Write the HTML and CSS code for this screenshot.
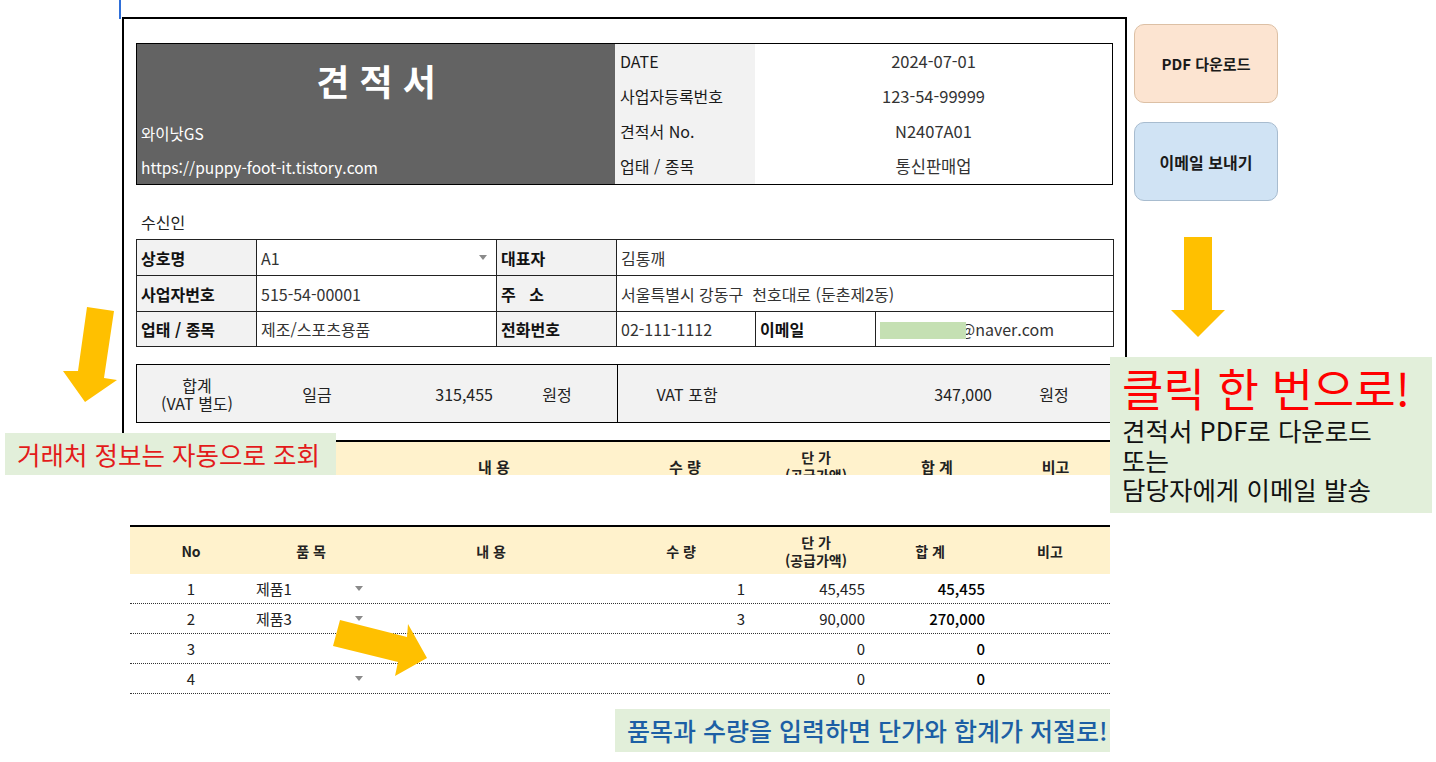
FILE: index.html
```html
<!DOCTYPE html>
<html lang="ko">
<head>
<meta charset="utf-8">
<title>견적서</title>
<link rel="stylesheet" href="styles.css">
</head>
<body>
<div class="cursor"></div>

<div class="top">
  <div class="sheet">
    <div class="hdr">
      <div class="brand">
        <div class="title">견 적 서</div>
        <div class="bline">와이낫GS</div>
        <div class="bline">https://puppy-foot-it.tistory.com</div>
      </div>
      <div class="ilabel">DATE</div><div class="ival">2024-07-01</div>
      <div class="ilabel">사업자등록번호</div><div class="ival">123-54-99999</div>
      <div class="ilabel">견적서 No.</div><div class="ival">N2407A01</div>
      <div class="ilabel">업태 / 종목</div><div class="ival">통신판매업</div>
    </div>

    <div class="recv-title">수신인</div>
    <table class="recv">
      <colgroup>
        <col class="w120"><col class="w240"><col class="w120"><col class="w139"><col class="w120"><col class="w238">
      </colgroup>
      <tr class="h36">
        <th>상호명</th>
        <td><div class="dd"><span>A1</span><i class="caret"></i></div></td>
        <th>대표자</th>
        <td colspan="3">김통깨</td>
      </tr>
      <tr class="h36">
        <th>사업자번호</th>
        <td>515-54-00001</td>
        <th>주&nbsp;&nbsp;&nbsp;소</th>
        <td colspan="3">서울특별시 강동구&nbsp; 천호대로 (둔촌제2동)</td>
      </tr>
      <tr class="h35">
        <th>업태 / 종목</th>
        <td>제조/스포츠용품</td>
        <th>전화번호</th>
        <td>02-111-1112</td>
        <th class="plain">이메일</th>
        <td><span class="mask"></span><span class="mail">@naver.com</span></td>
      </tr>
    </table>

    <div class="total">
      <div class="tc two">합계<br>(VAT 별도)</div>
      <div class="tc">일금</div>
      <div class="tc r">315,455</div>
      <div class="tc">원정</div>
      <div class="tc sep">VAT 포함</div>
      <div class="tc r">347,000</div>
      <div class="tc">원정</div>
    </div>

    <div class="uhead">
      <div></div>
      <div></div>
      <div>내 용</div>
      <div>수 량</div>
      <div class="two cut">단 가<br>(공급가액)</div>
      <div>합 계</div>
      <div>비고</div>
    </div>
  </div>

  <div class="btns">
    <div class="btn pdf">PDF 다운로드</div>
    <div class="btn email">이메일 보내기</div>
  </div>
</div>

<div class="items">
  <div class="irow ihead">
    <div>No</div>
    <div>품 목</div>
    <div>내 용</div>
    <div>수 량</div>
    <div class="two shift">단 가<br>(공급가액)</div>
    <div>합 계</div>
    <div>비고</div>
  </div>
  <div class="irow">
    <div class="c">1</div>
    <div class="prod"><span>제품1</span><i class="caret"></i></div>
    <div></div>
    <div class="r">1</div>
    <div class="r">45,455</div>
    <div class="r b">45,455</div>
    <div></div>
  </div>
  <div class="irow">
    <div class="c">2</div>
    <div class="prod"><span>제품3</span><i class="caret"></i></div>
    <div></div>
    <div class="r">3</div>
    <div class="r">90,000</div>
    <div class="r b">270,000</div>
    <div></div>
  </div>
  <div class="irow">
    <div class="c">3</div>
    <div class="prod"><span></span></div>
    <div></div>
    <div class="r"></div>
    <div class="r">0</div>
    <div class="r b">0</div>
    <div></div>
  </div>
  <div class="irow">
    <div class="c">4</div>
    <div class="prod"><span></span><i class="caret"></i></div>
    <div></div>
    <div class="r"></div>
    <div class="r">0</div>
    <div class="r b">0</div>
    <div></div>
  </div>
</div>

<div class="note-bottom">품목과 수량을 입력하면 단가와 합계가 저절로!</div>

<div class="note-left">거래처 정보는 자동으로 조회</div>

<div class="note-right">
  <div class="big">클릭 한 번으로!</div>
  <div class="ln">견적서 PDF로 다운로드</div>
  <div class="ln">또는</div>
  <div class="ln">담당자에게 이메일 발송</div>
</div>

<svg class="arrow a-left" width="60" height="100" viewBox="0 0 60 100">
  <polygon points="27,3 54,7 44,74 57,76 25,98 3,67 18,67"/>
</svg>
<svg class="arrow a-right" width="56" height="101" viewBox="0 0 56 101">
  <polygon points="14,0 42,0 42,73 55,73 28,100 1,73 14,73"/>
</svg>
<svg class="arrow a-mid" width="100" height="60" viewBox="0 0 100 60">
  <polygon points="10,2 77,19 78,6 97,40 65,58 68,44 3,28"/>
</svg>
</body>
</html>
```

FILE: styles.css
```css
* { box-sizing: border-box; margin: 0; padding: 0; }

html, body {
  width: 1436px;
  height: 762px;
  overflow: hidden;
  background: #fff;
}

body {
  position: relative;
  font-family: "Noto Sans CJK KR", "Noto Sans", sans-serif;
  font-size: 16px;
  color: #222;
}

.cursor {
  position: absolute;
  left: 119px;
  top: 0;
  width: 2px;
  height: 19px;
  background: #2f6fd8;
}

.top {
  display: flex;
  align-items: flex-start;
}

.sheet {
  margin-left: 122px;
  margin-top: 17px;
  width: 1005px;
  height: 458px;
  border: 2px solid #000;
  border-bottom: none;
  padding: 24px 0 0 12px;
  overflow: hidden;
}

/* header */
.hdr {
  width: 977px;
  height: 142px;
  border: 1px solid #000;
  display: grid;
  grid-template-columns: 478px 140px 1fr;
  grid-template-rows: repeat(4, 35px);
}

.brand {
  grid-row: 1 / span 4;
  background: #636363;
  color: #fff;
  padding-left: 4px;
}

.title {
  text-align: center;
  font-size: 36px;
  font-weight: 700;
  line-height: 72px;
  padding-right: 4px;
}

.bline {
  line-height: 34px;
  font-size: 15.5px;
}

.ilabel {
  background: #f2f2f2;
  padding-left: 5px;
  line-height: 35px;
  white-space: nowrap;
  color: #1a1a1a;
}

.ival {
  text-align: center;
  line-height: 35px;
  color: #333;
  font-size: 16.5px;
}

/* recipient */
.recv-title {
  margin-top: 26px;
  margin-bottom: 6px;
  line-height: 22px;
  padding-left: 5px;
}

.recv {
  width: 977px;
  border-collapse: collapse;
  table-layout: fixed;
  border: 1px solid #000;
}

.w120 { width: 120px; }
.w240 { width: 240px; }
.w139 { width: 139px; }
.w238 { width: 238px; }

.h36 { height: 36px; }
.h35 { height: 35px; }

.recv th, .recv td {
  border: 1px solid #222;
  padding: 0 4px;
  text-align: left;
  white-space: nowrap;
  font-size: 16px;
}

.recv th {
  background: #f2f2f2;
  font-weight: 700;
  color: #111;
}

.recv th.plain { background: #fff; }

.recv td { color: #333; font-weight: 400; }

.dd {
  display: flex;
  align-items: center;
  justify-content: space-between;
  padding-right: 5px;
}

.caret {
  display: inline-block;
  width: 0;
  height: 0;
  border-left: 4px solid transparent;
  border-right: 4px solid transparent;
  border-top: 5px solid #8a8a8a;
}

.mask {
  position: relative;
  z-index: 1;
  display: inline-block;
  width: 86px;
  height: 17px;
  vertical-align: -3px;
  background: #c5e0b3;
}

.mail {
  margin-left: -6px;
}

/* total */
.total {
  margin-top: 17px;
  width: 977px;
  height: 59px;
  border: 1px solid #000;
  background: #f2f2f2;
  display: grid;
  grid-template-columns: 120px 120px 120px 120px 139px 240px 1fr;
  font-size: 16px;
}

.tc {
  display: flex;
  align-items: center;
  justify-content: center;
  text-align: center;
  white-space: nowrap;
}

.tc.r {
  justify-content: flex-end;
  padding-right: 4px;
}

.tc.sep { border-left: 1px solid #000; }

.two { line-height: 18px; }

/* upper (cropped) item header */
.uhead {
  margin-top: 17px;
  width: 977px;
  height: 50px;
  border-top: 2px solid #000;
  background: #fff2cc;
  display: grid;
  grid-template-columns: 120px 118px 240px 142px 120px 122px 1fr;
  align-items: center;
  text-align: center;
  font-weight: 700;
  font-size: 15px;
}

.uhead .cut { font-size: 14px; }

/* buttons */
.btns {
  margin-left: 7px;
  margin-top: 24px;
  display: flex;
  flex-direction: column;
  gap: 19px;
}

.btn {
  width: 144px;
  height: 79px;
  border-radius: 10px;
  display: flex;
  align-items: center;
  justify-content: center;
  font-weight: 700;
  color: #1a1a1a;
}

.btn.pdf {
  background: #fce4d1;
  border: 1px solid #dcc0a5;
  font-size: 15px;
}

.btn.email {
  background: #d0e3f4;
  border: 1px solid #a8bccf;
  font-size: 16px;
}

/* items table */
.items {
  margin-left: 130px;
  margin-top: 50px;
  width: 980px;
  border-top: 2px solid #000;
}

.irow {
  display: grid;
  grid-template-columns: 122px 118px 242px 138px 120px 120px 1fr;
  align-items: center;
  height: 30px;
  border-bottom: 1px dotted #333;
  font-size: 15px;
}

.irow.ihead {
  height: 47px;
  border-bottom: none;
  background: #fff2cc;
  text-align: center;
  font-weight: 700;
  font-size: 14px;
}

.shift { padding-left: 12px; }

.irow .c { text-align: center; }

.irow .r {
  text-align: right;
  padding-right: 5px;
}

.irow .b { font-weight: 500; color: #000; }

.prod {
  display: flex;
  align-items: center;
  justify-content: space-between;
  padding: 0 7px 0 4px;
}

/* callouts */
.note-bottom {
  margin-left: 615px;
  margin-top: 15px;
  width: 495px;
  height: 43px;
  background: #e2efda;
  color: #1c5fa5;
  font-size: 25px;
  font-weight: 500;
  line-height: 43px;
  padding-left: 12px;
  white-space: nowrap;
}

.note-left {
  position: absolute;
  left: 5px;
  top: 433px;
  width: 331px;
  height: 42px;
  background: #e2efda;
  color: #e31b1b;
  font-size: 25.5px;
  line-height: 42px;
  padding-left: 12px;
  white-space: nowrap;
}

.note-right {
  position: absolute;
  left: 1110px;
  top: 357px;
  width: 322px;
  height: 156px;
  background: #e2efda;
  padding: 6px 0 0 12px;
  white-space: nowrap;
}

.note-right .big {
  font-size: 45px;
  line-height: 50px;
  height: 52px;
  color: #ff0000;
}

.note-right .ln {
  font-size: 25.5px;
  line-height: 29.5px;
  height: 29.5px;
  color: #111;
}

/* arrows */
.arrow {
  position: absolute;
  fill: #ffc000;
}

.a-left { left: 60px; top: 304px; }
.a-right { left: 1170px; top: 237px; }
.a-mid { left: 330px; top: 618px; }
```
